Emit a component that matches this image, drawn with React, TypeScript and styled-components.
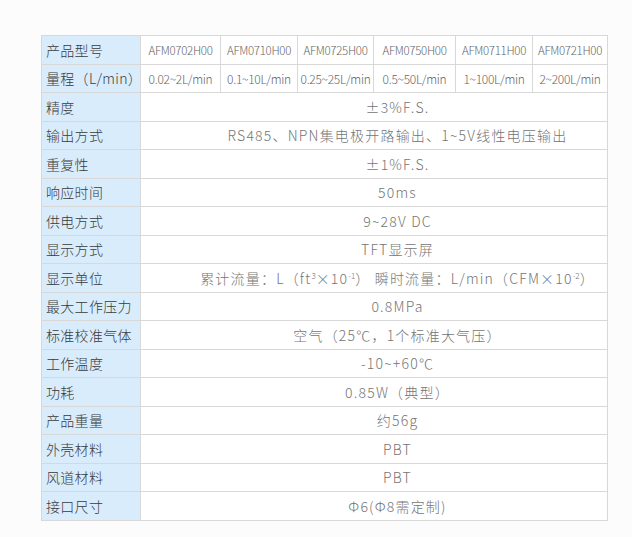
import styled, { createGlobalStyle } from 'styled-components';

const GlobalStyle = createGlobalStyle`
  html, body {
    margin: 0;
    padding: 0;
    background: #fcfcfc;
  }
`;

const models = [
  { name: 'AFM0702H00', range: '0.02~2L/min' },
  { name: 'AFM0710H00', range: '0.1~10L/min' },
  { name: 'AFM0725H00', range: '0.25~25L/min' },
  { name: 'AFM0750H00', range: '0.5~50L/min' },
  { name: 'AFM0711H00', range: '1~100L/min' },
  { name: 'AFM0721H00', range: '2~200L/min' },
];

const colWidths = [99, 80, 77, 76, 82, 77, 75];

const specs: { label: string; value: React.ReactNode }[] = [
  { label: '精度', value: '±3%F.S.' },
  { label: '输出方式', value: 'RS485、NPN集电极开路输出、1~5V线性电压输出' },
  { label: '重复性', value: '±1%F.S.' },
  { label: '响应时间', value: '50ms' },
  { label: '供电方式', value: '9~28V DC' },
  { label: '显示方式', value: 'TFT显示屏' },
  {
    label: '显示单位',
    value: (
      <>
        累计流量：L（ft<sup>3</sup>×10<sup>-1</sup>） 瞬时流量：L/min（CFM×10<sup>-2</sup>）
      </>
    ),
  },
  { label: '最大工作压力', value: '0.8MPa' },
  { label: '标准校准气体', value: '空气（25℃，1个标准大气压）' },
  { label: '工作温度', value: '-10~+60℃' },
  { label: '功耗', value: '0.85W（典型）' },
  { label: '产品重量', value: '约56g' },
  { label: '外壳材料', value: 'PBT' },
  { label: '风道材料', value: 'PBT' },
  { label: '接口尺寸', value: 'Φ6(Φ8需定制)' },
];

export default function App() {
  return (
    <Page>
      <GlobalStyle />
      <SpecTable>
        <colgroup>
          {colWidths.map((w, i) => (
            <col key={i} style={{ width: w }} />
          ))}
        </colgroup>
        <tbody>
          <Row>
            <Label>产品型号</Label>
            {models.map((m) => (
              <Cell key={m.name} $size={11.5}>
                {m.name}
              </Cell>
            ))}
          </Row>
          <Row>
            <Label>量程（L/min）</Label>
            {models.map((m) => (
              <Cell key={m.name} $size={12}>
                {m.range}
              </Cell>
            ))}
          </Row>
          {specs.map((s) => (
            <Row key={s.label}>
              <Label>{s.label}</Label>
              <Value colSpan={6}>{s.value}</Value>
            </Row>
          ))}
        </tbody>
      </SpecTable>
    </Page>
  );
}

const Page = styled.div`
  padding: 35px 0 17px 41px;
  font-family: 'Noto Sans CJK SC', 'Noto Sans', sans-serif;
`;

const SpecTable = styled.table`
  width: 566px;
  table-layout: fixed;
  border-collapse: collapse;
  background: #fff;
`;

const Row = styled.tr`
  height: 28.5px;
`;

const Label = styled.td`
  background: #d9ecfc;
  border: 1px solid #d8d8d8;
  padding: 0 0 0 4px;
  font-size: 14px;
  font-weight: 300;
  color: #3a3a3a;
  white-space: nowrap;
  letter-spacing: 0.3px;
  vertical-align: middle;
`;

const Cell = styled.td<{ $size: number }>`
  border: 1px solid #d8d8d8;
  padding: 0;
  text-align: center;
  font-size: ${(p) => p.$size}px;
  font-weight: 300;
  color: #666;
  white-space: nowrap;
  letter-spacing: -0.3px;
  vertical-align: middle;
`;

const Value = styled.td`
  border: 1px solid #d8d8d8;
  padding: 0 0 0 47px;
  text-align: center;
  font-size: 14px;
  font-weight: 300;
  color: #757575;
  letter-spacing: 1.2px;
  white-space: nowrap;
  vertical-align: middle;

  sup {
    font-size: 8px;
    line-height: 0;
    vertical-align: 5px;
    letter-spacing: 0;
  }
`;
